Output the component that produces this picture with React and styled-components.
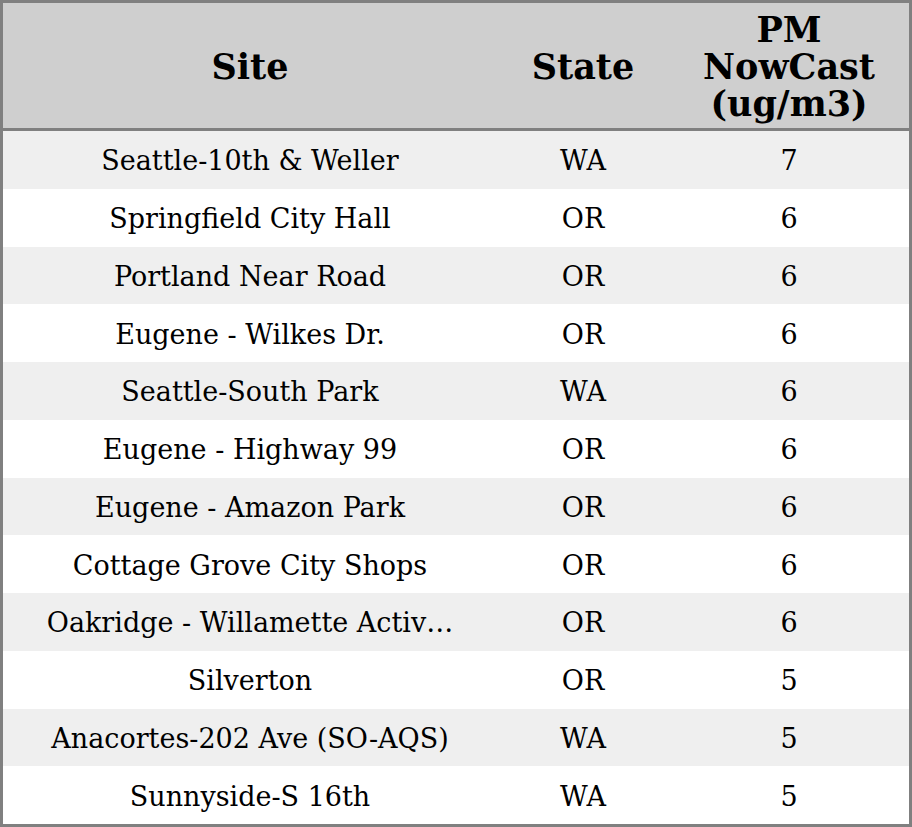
import React from "react";
import styled, { createGlobalStyle } from "styled-components";

const rows = [
  ["Seattle-10th & Weller", "WA", 7],
  ["Springfield City Hall", "OR", 6],
  ["Portland Near Road", "OR", 6],
  ["Eugene - Wilkes Dr.", "OR", 6],
  ["Seattle-South Park", "WA", 6],
  ["Eugene - Highway 99", "OR", 6],
  ["Eugene - Amazon Park", "OR", 6],
  ["Cottage Grove City Shops", "OR", 6],
  ["Oakridge - Willamette Activ…", "OR", 6],
  ["Silverton", "OR", 5],
  ["Anacortes-202 Ave (SO-AQS)", "WA", 5],
  ["Sunnyside-S 16th", "WA", 5],
];

const GlobalStyle = createGlobalStyle`
  html, body {
    margin: 0;
    padding: 0;
    background: #ffffff;
  }
  * {
    box-sizing: border-box;
  }
`;

const Table = styled.div`
  width: 912px;
  height: 827px;
  border: 3px solid #808080;
  display: grid;
  grid-template-columns: 494px 172px 240px;
  grid-template-rows: 128px repeat(12, 1fr);
  font-family: "DejaVu Serif", serif;
  color: #000;
`;

const HeadCell = styled.div`
  display: flex;
  align-items: center;
  justify-content: center;
  text-align: center;
  background: #cfcfcf;
  border-bottom: 3px solid #808080;
  padding-top: 1px;
  font-weight: bold;
  font-size: 35px;
  line-height: 37px;
`;

const Cell = styled.div`
  display: flex;
  align-items: center;
  justify-content: center;
  background: ${(p) => (p.$odd ? "#efefef" : "#ffffff")};
  padding-top: 2px;
  font-size: 27px;
  white-space: nowrap;
  min-width: 0;
`;

export default function App() {
  return (
    <>
      <GlobalStyle />
      <Table>
        <HeadCell>Site</HeadCell>
        <HeadCell>State</HeadCell>
        <HeadCell>
          PM
          <br />
          NowCast
          <br />
          (ug/m3)
        </HeadCell>
        {rows.map((row, index) =>
          row.map((value, col) => (
            <Cell key={`${index}-${col}`} $odd={index % 2 === 0}>
              {value}
            </Cell>
          ))
        )}
      </Table>
    </>
  );
}
